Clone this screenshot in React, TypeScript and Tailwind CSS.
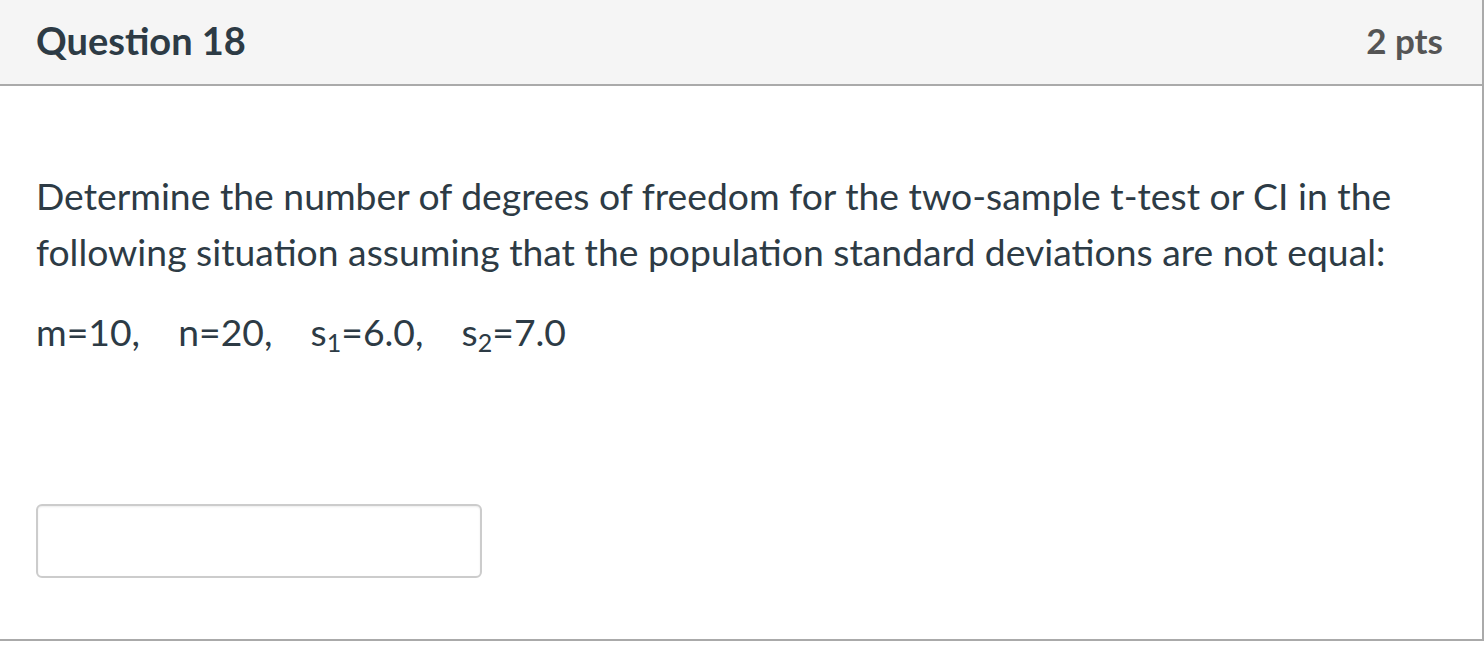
export default function App() {
  return (
    <div className="w-[1484px] h-[648px] bg-white" style={{ fontFamily: 'Lato, "Noto Sans", sans-serif' }}>
      <div className="h-[641px] border-r-2 border-b-2 border-[#aaaaaa] bg-white flex flex-col">
        <div className="h-[86px] shrink-0 flex items-center justify-between pl-[36px] pr-[39px] pb-[4px] bg-[#f5f5f5] border-b-2 border-[#aaaaaa]">
          <h2 className="text-[38px] font-bold text-[#2d3b45] leading-none">Question 18</h2>
          <div className="text-[35px] font-bold text-[#555555] leading-none">2 pts</div>
        </div>
        <div className="pl-[36px] pt-[82px] text-[37.3px] leading-[56px] text-[#2d3b45]">
          <p>
            Determine the number of degrees of freedom for the two-sample t-test or CI in the following situation assuming that the population standard deviations are not equal:
          </p>
          <p className="mt-[24px]">
            m=10,&nbsp;&nbsp;&nbsp; n=20,&nbsp;&nbsp;&nbsp; s<sub className="text-[25px]">1</sub>=6.0,&nbsp;&nbsp;&nbsp; s<sub className="text-[25px]">2</sub>=7.0
          </p>
          <input
            type="text"
            className="mt-[144px] block w-[446px] h-[74px] rounded-[6px] border-2 border-[#cccccc] bg-white shadow-[inset_0_1px_2px_rgba(0,0,0,0.08)] outline-none"
          />
        </div>
      </div>
    </div>
  );
}
